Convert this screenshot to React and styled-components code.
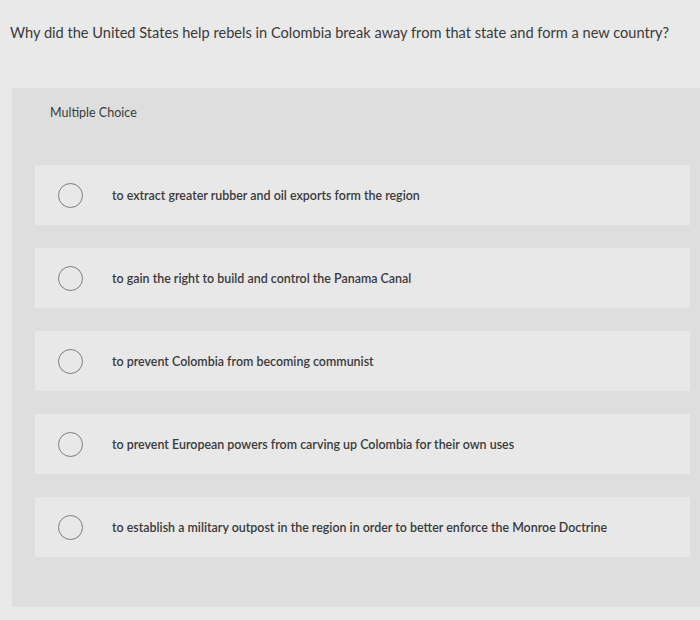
import React from "react";
import styled, { createGlobalStyle } from "styled-components";

const Global = createGlobalStyle`
  html, body { margin: 0; padding: 0; }
  body {
    background: #e8e9e8;
    font-family: Lato, "Open Sans", "Liberation Sans", sans-serif;
    color: #333;
    width: 700px;
    height: 620px;
    overflow: hidden;
  }
`;

const Page = styled.div`
  display: flex;
  flex-direction: column;
  height: 620px;
`;

const Question = styled.div`
  padding: 24px 0 0 10px;
  font-size: 14.6px;
  line-height: 18px;
  color: #3a3a3c;
  height: 88px;
  box-sizing: border-box;
`;

const Panel = styled.section`
  margin-left: 12px;
  background: #dddedd;
  height: 519px;
  display: flex;
  flex-direction: column;
`;

const Header = styled.div`
  padding: 18px 0 0 38px;
  height: 77px;
  box-sizing: border-box;
  font-size: 12.5px;
  line-height: 14px;
  color: #3a3a3c;
`;

const List = styled.ul`
  list-style: none;
  margin: 0;
  padding: 0 10px 0 23px;
  display: flex;
  flex-direction: column;
  gap: 23px;
`;

const Row = styled.li`
  height: 60px;
  background: #e7e8e7;
  display: flex;
  align-items: center;
  padding-left: 23px;
`;

const Radio = styled.span`
  width: 23px;
  height: 23px;
  border-radius: 50%;
  border: 1.5px solid #7c7c84;
  flex: none;
`;

const Label = styled.span`
  margin-left: 29px;
  font-size: 12.45px;
  font-weight: 600;
  color: #3a3a3c;
`;

const options = [
  "to extract greater rubber and oil exports form the region",
  "to gain the right to build and control the Panama Canal",
  "to prevent Colombia from becoming communist",
  "to prevent European powers from carving up Colombia for their own uses",
  "to establish a military outpost in the region in order to better enforce the Monroe Doctrine",
];

export default function App() {
  return (
    <Page>
      <Global />
      <Question>
        Why did the United States help rebels in Colombia break away from that state and form a new country?
      </Question>
      <Panel>
        <Header>Multiple Choice</Header>
        <List>
          {options.map((o) => (
            <Row key={o}>
              <Radio />
              <Label>{o}</Label>
            </Row>
          ))}
        </List>
      </Panel>
    </Page>
  );
}
